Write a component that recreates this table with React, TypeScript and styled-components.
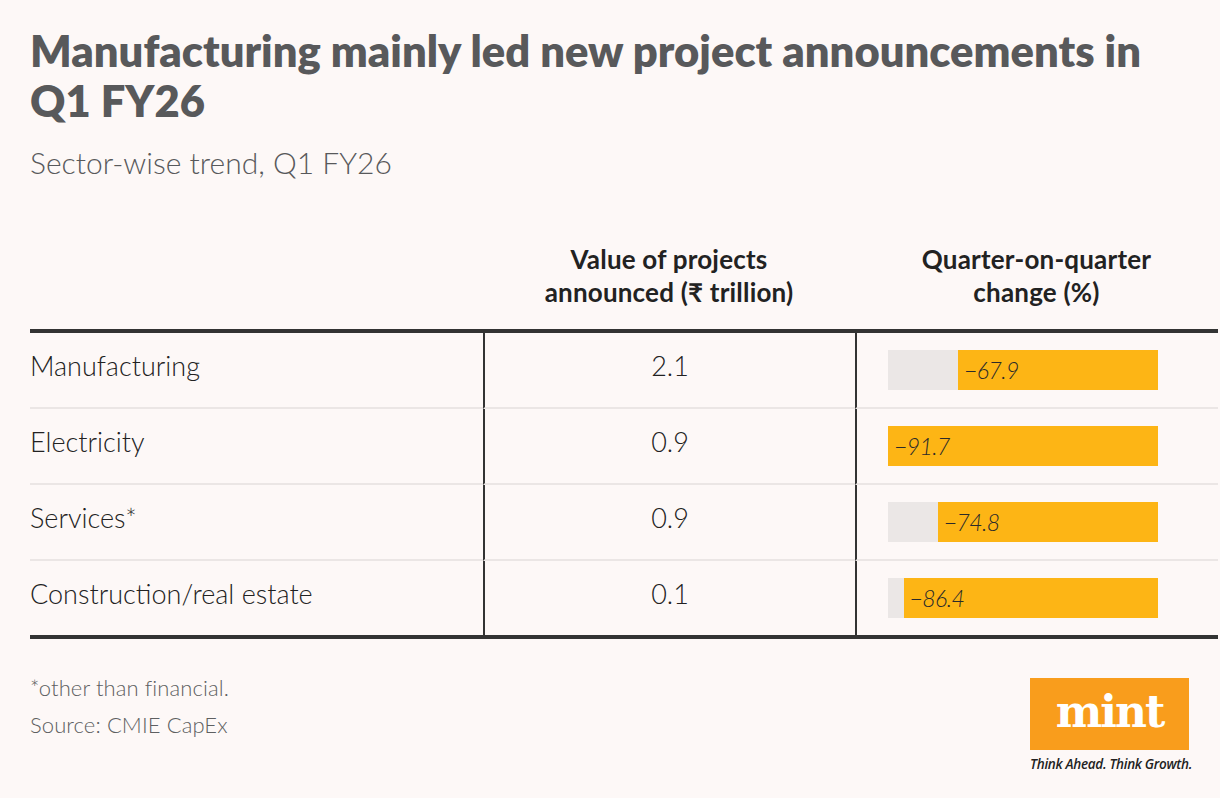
import React from "react"
import styled, { createGlobalStyle } from 'styled-components'

const GlobalStyle = createGlobalStyle`
html, body {
margin: 0;
padding: 0;
background: #fdf8f7;
}
body {
font-family: Lato, "Open Sans", sans-serif;
}
`

const Page = styled.div`
width: 1220px;
height: 798px;
box-sizing: border-box;
padding: 25px 2px 0 30px;
background: #fdf8f7;
`

const Title = styled.h1`
margin: 0;
font-family: Lato, sans-serif;
font-weight: 800;
font-size: 43.5px;
line-height: 50px;
letter-spacing: 0;
color: #58595b;
`

const Subtitle = styled.div`
margin-top: 18px;
font-family: Lato, sans-serif;
font-weight: 300;
font-size: 30px;
line-height: 38px;
color: #58595b;
`

const Table = styled.div`
margin-top: 62px;
display: grid;
grid-template-columns: 453px 372px 363px;
`

const HeadCell = styled.div`
display: flex;
align-items: flex-end;
justify-content: center;
text-align: center;
padding-bottom: 20px;
font-family: Lato, sans-serif;
font-weight: 700;
font-size: 26px;
line-height: 33px;
letter-spacing: 0.2px;
color: #222;
border-bottom: 4px solid #333;
`

const Cell = styled.div<{ $last?: boolean; $divider?: boolean; $center?: boolean }>`
height: 64px;
padding-bottom: 10px;
display: flex;
align-items: center;
justify-content: ${p => p.$center ? 'center' : 'flex-start'};
box-sizing: content-box;
border-bottom: 2px solid ${p => p.$last ? 'transparent' : '#ebe6e5'};
border-left: ${p => p.$divider ? '2px solid #333' : 'none'};
font-family: Lato, sans-serif;
font-weight: 300;
font-size: 27px;
color: #222;
`

const BarCell = styled(Cell)`
height: 74px;
padding-bottom: 0;
padding-left: 31px;
`

const BarTrack = styled.div`
width: 270px;
height: 40px;
background: #ebe7e6;
display: flex;
justify-content: flex-end;
`

const BarFill = styled.div`
height: 100%;
background: #fdb515;
display: flex;
align-items: center;
padding-left: 6px;
box-sizing: border-box;
font-family: Lato, sans-serif;
font-style: italic;
font-weight: 300;
font-size: 23px;
letter-spacing: -0.6px;
color: #2a2a2a;
`

const BottomRule = styled.div`
grid-column: 1 / -1;
height: 4px;
background: #333;
margin-top: -2px;
`

const Footer = styled.div`
margin-top: 30px;
display: flex;
justify-content: space-between;
align-items: flex-start;
padding-right: 26px;
`

const Notes = styled.div`
font-family: Lato, sans-serif;
font-weight: 300;
font-size: 22px;
line-height: 37px;
letter-spacing: 0.1px;
color: #5e5f61;
`

const Brand = styled.div`
display: flex;
flex-direction: column;
align-items: flex-start;
margin-top: 9px;
`

const LogoBox = styled.div`
width: 159px;
height: 72px;
background: #f99d1c;
display: flex;
align-items: center;
justify-content: center;
font-family: "DejaVu Serif", "Liberation Serif", serif;
font-weight: 700;
font-size: 44px;
letter-spacing: -2px;
color: #fff;
padding-bottom: 6px;
box-sizing: border-box;
`

const Tagline = styled.div`
margin-top: 5px;
font-family: "Open Sans", sans-serif;
font-style: italic;
font-weight: 600;
font-size: 13.5px;
letter-spacing: -0.3px;
color: #222;
`

const rows = [
    { sector: 'Manufacturing', value: '2.1', change: -67.9 },
    { sector: 'Electricity', value: '0.9', change: -91.7 },
    { sector: 'Services*', value: '0.9', change: -74.8 },
    { sector: 'Construction/real estate', value: '0.1', change: -86.4 },
]

const maxChange = 91.7

export const App: React.FunctionComponent = () => {
    return (
        <>
            <GlobalStyle />
            <Page>
                <Title>
                    Manufacturing mainly led new project announcements in<br />Q1 FY26
                </Title>
                <Subtitle>Sector-wise trend, Q1 FY26</Subtitle>

                <Table>
                    <HeadCell />
                    <HeadCell>Value of projects<br />announced (₹ trillion)</HeadCell>
                    <HeadCell>Quarter-on-quarter<br />change (%)</HeadCell>

                    {rows.map((r, i) => {
                        const last = i === rows.length - 1
                        return (
                            <React.Fragment key={r.sector}>
                                <Cell $last={last}>{r.sector}</Cell>
                                <Cell $last={last} $divider $center>{r.value}</Cell>
                                <BarCell $last={last} $divider>
                                    <BarTrack>
                                        <BarFill style={{ width: `${Math.abs(r.change) / maxChange * 100}%` }}>
                                            −{Math.abs(r.change).toFixed(1)}
                                        </BarFill>
                                    </BarTrack>
                                </BarCell>
                            </React.Fragment>
                        )
                    })}
                    <BottomRule />
                </Table>

                <Footer>
                    <Notes>
                        *other than financial.<br />
                        Source: CMIE CapEx
                    </Notes>
                    <Brand>
                        <LogoBox>mint</LogoBox>
                        <Tagline>Think Ahead. Think Growth.</Tagline>
                    </Brand>
                </Footer>
            </Page>
        </>
    )
}

export default App
